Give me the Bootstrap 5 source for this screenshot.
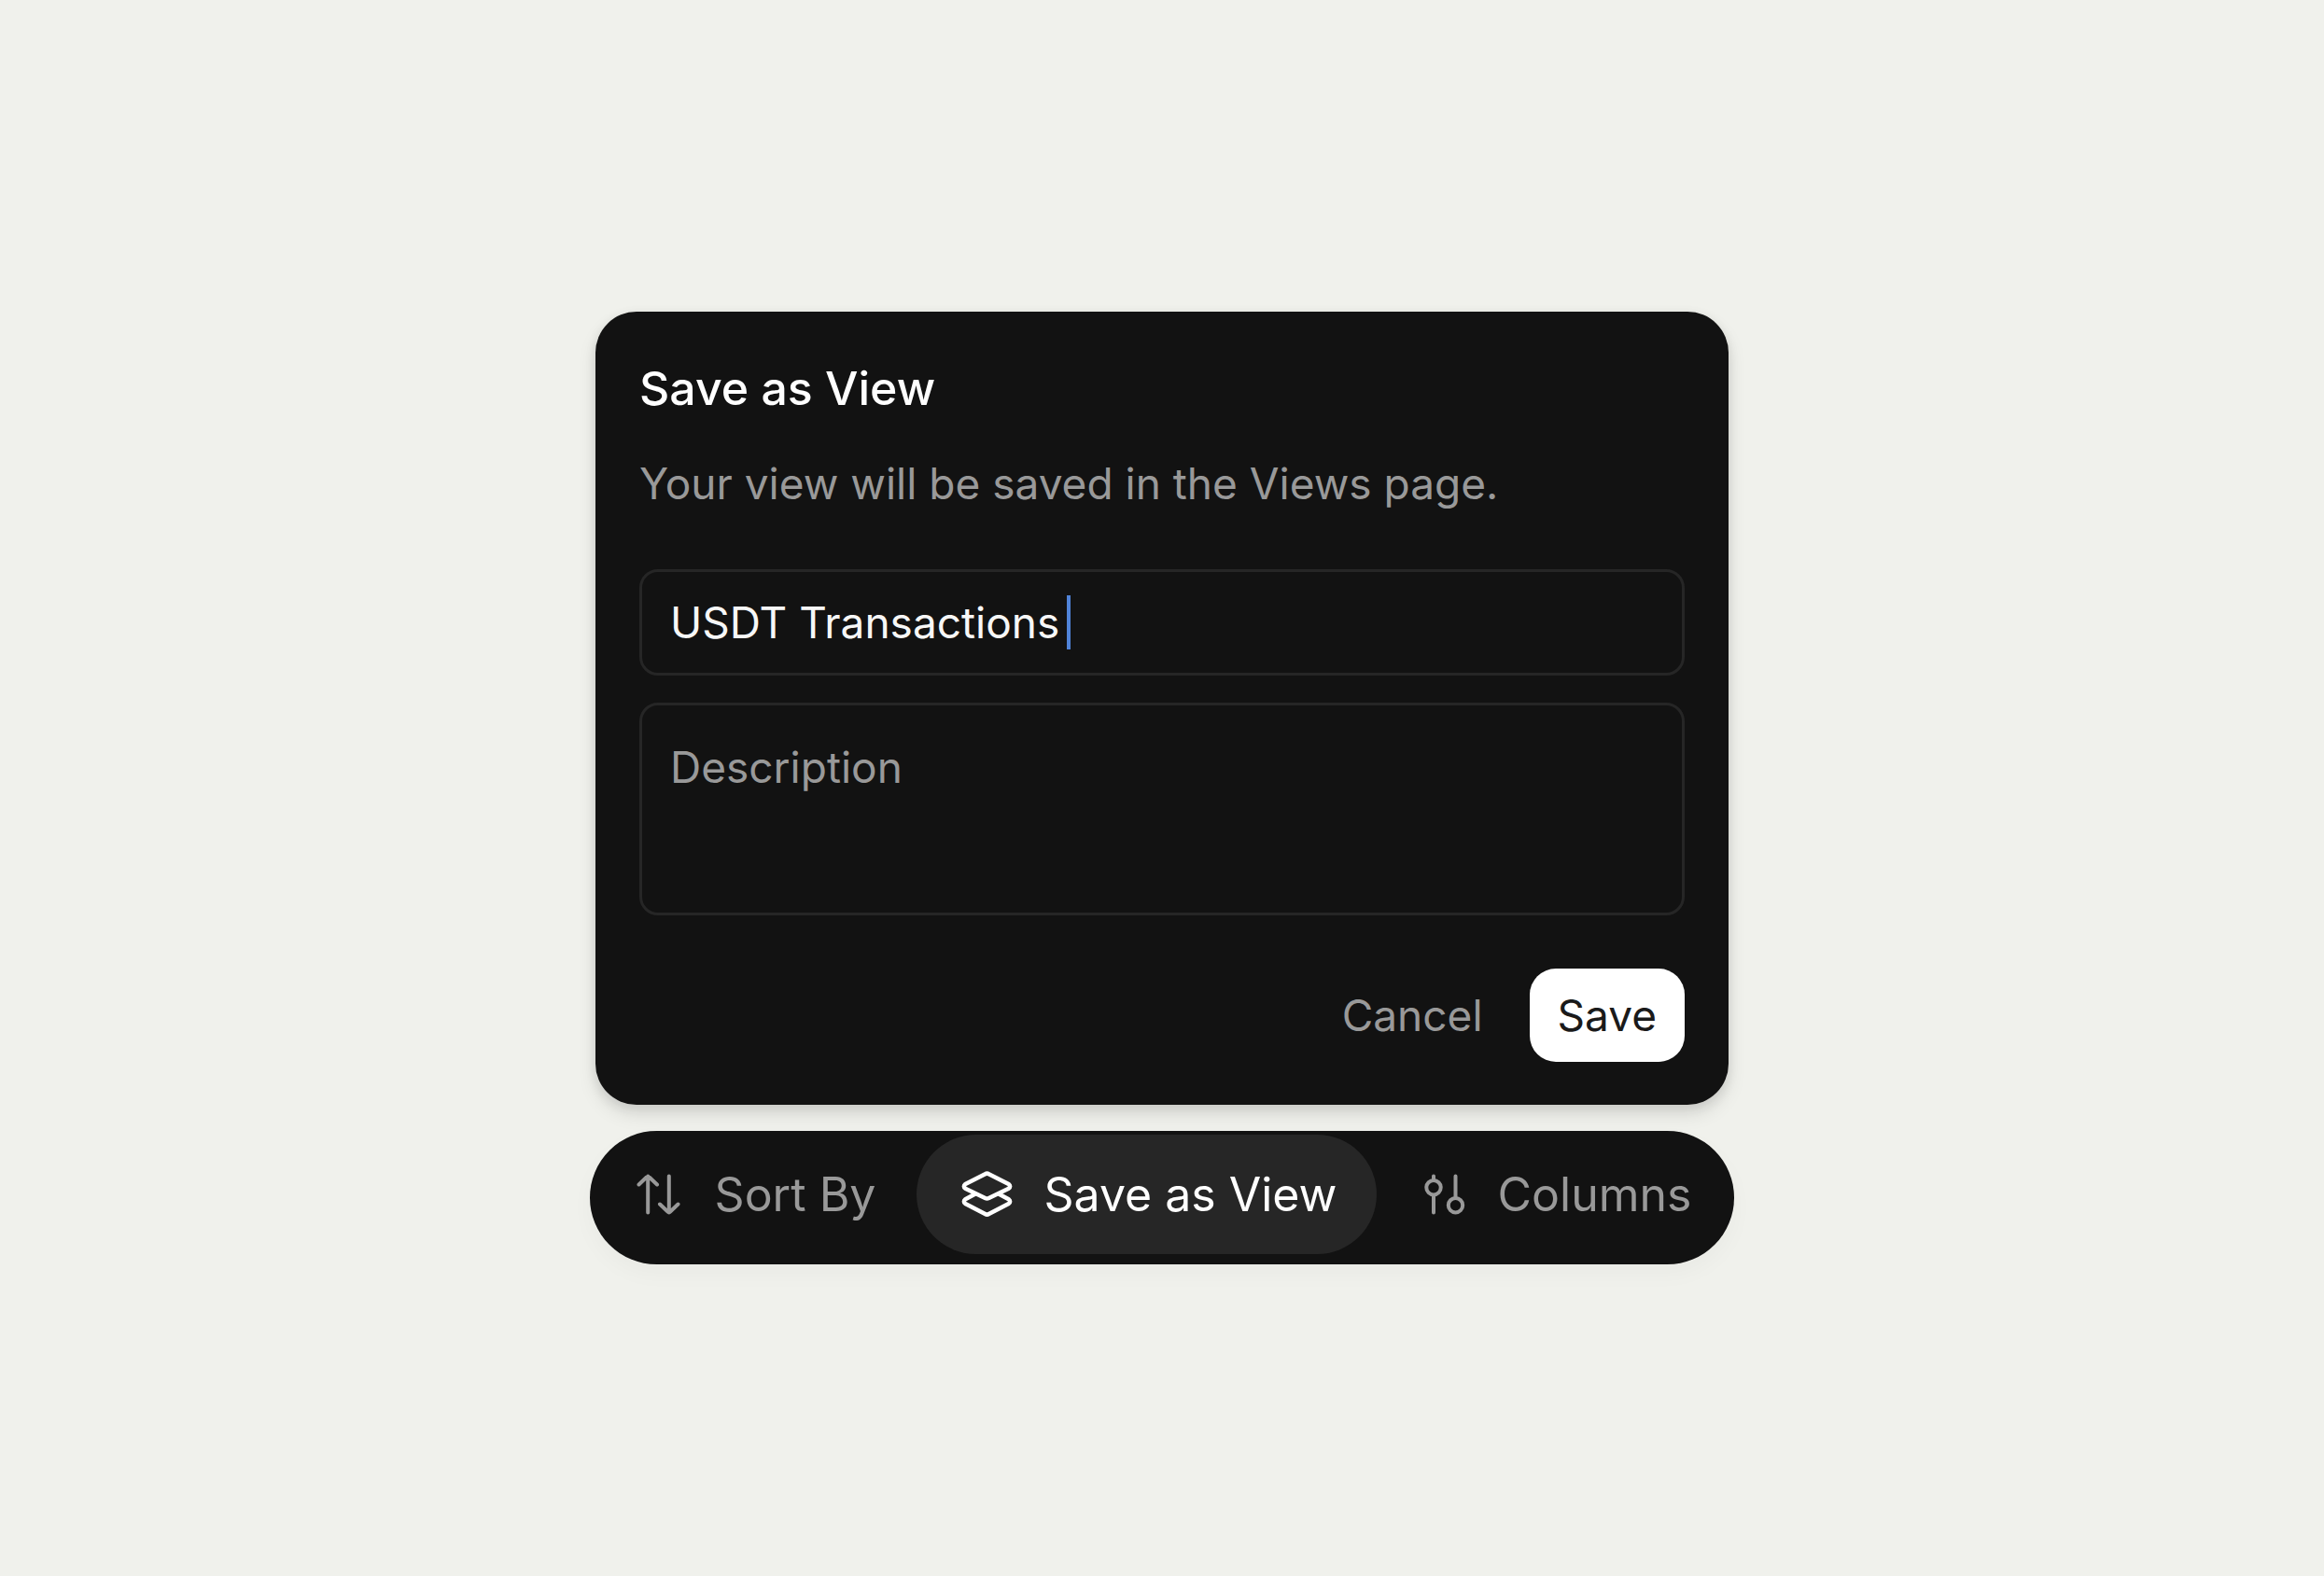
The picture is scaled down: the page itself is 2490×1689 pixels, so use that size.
<!DOCTYPE html>
<html lang="en">
<head>
<meta charset="utf-8">
<meta name="viewport" content="width=device-width, initial-scale=1">
<title>Save as View</title>
<link href="https://cdn.jsdelivr.net/npm/bootstrap@5.3.0/dist/css/bootstrap.min.css" rel="stylesheet">
<style>
  :root { --ink: #121212; --line: #262626; --soft: #999; }
  body { background: #f0f1ec; font-family: Inter, "Liberation Sans", sans-serif; font-size: 46px; line-height: 56px; }
  .view-panel { background: var(--ink); border-radius: 44px; width: 100%; max-width: 1214px; padding: 52px 47px 46px;
    box-shadow: 0 10px 20px rgba(18,18,18,.1), 0 4px 12px rgba(18,18,18,.1); }
  .view-title { font-size: 50px; line-height: 60px; font-weight: 500; margin-bottom: 44px; }
  .soft-text { color: var(--soft); }
  .view-hint { margin-bottom: 64px; }
  .view-field { background: transparent; border: 3px solid var(--line); border-radius: 20px; color: #f7f7f7;
    font-size: 46px; line-height: 56px; padding: 26px 30px; resize: none; }
  .view-field:focus { background: transparent; color: #f7f7f7; border-color: var(--line); box-shadow: none; }
  .view-field::placeholder { color: var(--soft); opacity: 1; }
  .name-wrap { margin-bottom: 29px; }
  textarea.view-field { height: 228px; padding-top: 38px; }
  .text-caret { left: 458px; width: 4px; height: 58px; background: #5083d8; }
  .actions { margin-top: 57px; gap: 20px; }
  .act { font-size: 46px; line-height: 56px; padding: 22px 30px; border: 0; border-radius: 28px; }
  .act-save, .act-save:hover { background: #fff; color: #1a1a1a; }
  .tool-bar { background: var(--ink); border-radius: 72px; margin-top: 28px; padding: 4px 0 11px; max-width: 100%;
    box-shadow: 0 10px 24px rgba(18,18,18,.03); }
  .tool { font-size: 50px; line-height: 60px; padding: 34px 44px; gap: 30px; border: 0; color: var(--soft); }
  .tool.active { background: var(--line) !important; color: #fff !important; padding-left: 46px; padding-right: 42px; }
  .tool:last-child { padding-left: 42px; padding-right: 46px; gap: 28px; }
  .tool svg { width: 60px; height: 60px; flex: none; fill: none; stroke: currentColor; stroke-width: 4; stroke-linecap: round; stroke-linejoin: round; }
</style>
</head>
<body>
<main class="min-vh-100 d-flex flex-column align-items-center justify-content-center">
  <form class="view-panel">
    <h1 class="view-title text-white">Save as View</h1>
    <p class="view-hint soft-text">Your view will be saved in the Views page.</p>
    <div class="name-wrap position-relative d-flex align-items-center">
      <input class="form-control view-field" type="text" aria-label="View name" value="USDT Transactions">
      <span class="text-caret position-absolute" aria-hidden="true"></span>
    </div>
    <textarea class="form-control view-field d-block" aria-label="Description" placeholder="Description"></textarea>
    <div class="actions d-flex justify-content-end">
      <button type="button" class="btn act soft-text">Cancel</button>
      <button type="button" class="btn act act-save">Save</button>
    </div>
  </form>
  <div class="tool-bar d-flex" role="toolbar" aria-label="View tools">
    <button type="button" class="btn tool rounded-pill d-flex align-items-center">
      <svg viewBox="0 0 60 60" aria-hidden="true"><path d="M18.200 49.500V10.500M8.500 19.500L16.800 11.500Q18.200 10.200 19.600 11.500L28 19.500M40.800 10.500V49.500M31 40.500L39.400 48.500Q40.800 49.800 42.200 48.500L50.500 40.500"/></svg>
      Sort By
    </button>
    <button type="button" class="btn tool active rounded-pill d-flex align-items-center">
      <svg viewBox="0 0 60 60" aria-hidden="true"><g stroke-width="4.500"><path d="M6.300 19L27.500 8.200Q29.500 7 31.500 8.200L52.700 19Q55.600 21.500 52.700 23.700L31.500 34Q29.500 35 27.500 34L6.300 23.700Q3.400 21.500 6.300 19Z"/><path d="M16.500 29.800L6.300 35.200Q3.400 37.700 6.300 39.900L27.500 51Q29.500 52.200 31.500 51L52.700 39.900Q55.600 37.700 52.700 35.200L42.500 29.800"/></g></svg>
      Save as View
    </button>
    <button type="button" class="btn tool rounded-pill d-flex align-items-center">
      <svg viewBox="0 0 60 60" aria-hidden="true"><circle cx="19" cy="22.700" r="7.700"/><circle cx="42.500" cy="41.700" r="7.700"/><path d="M19 10.500V14.500M19 31V49.500M42.500 10.500V33.500"/></svg>
      Columns
    </button>
  </div>
</main>
<script src="https://cdn.jsdelivr.net/npm/bootstrap@5.3.0/dist/js/bootstrap.bundle.min.js"></script>
</body>
</html>
